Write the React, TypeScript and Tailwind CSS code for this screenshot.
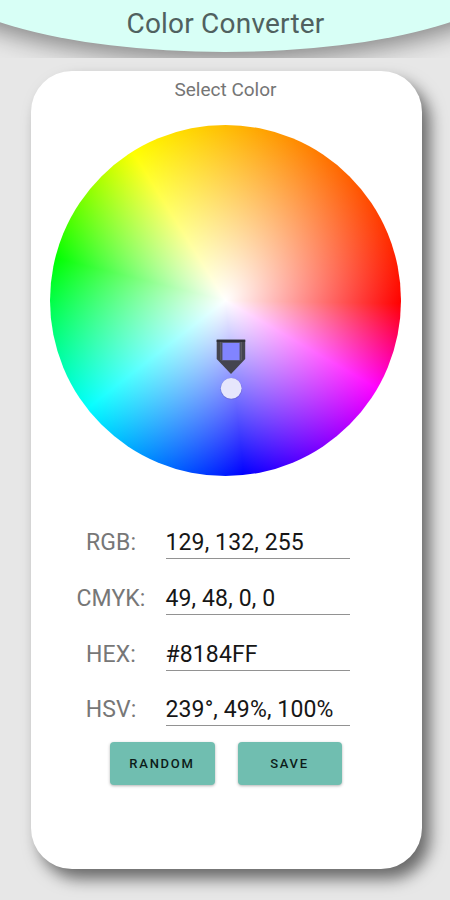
const rows = [
  { label: "RGB:", value: "129, 132, 255" },
  { label: "CMYK:", value: "49, 48, 0, 0" },
  { label: "HEX:", value: "#8184FF" },
  { label: "HSV:", value: "239°, 49%, 100%" },
];

function Header() {
  return (
    <header className="relative h-[58px] overflow-hidden">
      <div className="absolute bottom-[6px] left-1/2 h-[176px] w-[600px] -translate-x-1/2 rounded-[50%] bg-[#d8fff6] shadow-[0_8px_24px_rgba(0,0,0,0.42)]" />
      <h1 className="relative pl-px pt-[6.5px] text-center text-[28px] font-[385] leading-[33px] tracking-[0.2px] text-[#50615f]">Color Converter</h1>
    </header>
  );
}

function ColorWheel() {
  return (
    <div className="relative mr-[2px] mt-[24px] size-[351px] rounded-full bg-[radial-gradient(circle_closest-side,#fff,rgba(255,255,255,0)),conic-gradient(from_91deg,#f00_0deg,#f0f_29deg,#00f_83deg,#0ff_141deg,#0f0_193deg,#ff0_237deg,#f00_360deg)]">
      <svg className="absolute left-[166px] top-[214px]" width="30" height="62" viewBox="0 0 30 62">
        <path d="M0.7 0.7H29.2V20L15 35L0.7 20Z" fill="#44444f" />
        <path d="M0.7 0.7H29.2V3H0.7Z" fill="#303038" />
        <path d="M4.5 3V21M25.5 3V21" stroke="#5b5b62" strokeWidth="1" />
        <rect x="6" y="3.5" width="18" height="18" fill="#8184ff" stroke="#55566f" strokeWidth="1" />
        <circle cx="15.2" cy="49.8" r="10.8" fill="#55508c" opacity="0.3" />
        <circle cx="15.2" cy="49.3" r="10.4" fill="#e6e6fc" />
      </svg>
    </div>
  );
}

export default function App() {
  return (
    <div className="h-[900px] w-[450px] overflow-hidden bg-[#e7e7e7] font-[Roboto,sans-serif]">
      <Header />
      <main className="ml-[31px] mt-[13px] flex h-[798px] w-[391px] flex-col items-center rounded-[41px] bg-white shadow-[8px_10px_16px_rgba(0,0,0,0.55)]">
        <h2 className="mr-[2px] mt-[7px] text-[19px] font-[385] leading-[23px] text-[#757575]">Select Color</h2>
        <ColorWheel />
        <div className="mt-[44px] w-full">
          {rows.map((row) => (
            <div key={row.label} className="flex h-[55.8px] items-start">
              <span className="ml-[34px] w-[92px] pt-[9px] text-center text-[23px] font-[385] leading-[28px] tracking-[0.1px] text-[#777]">
                {row.label}
              </span>
              <span className="ml-[8.5px] h-[39px] w-[184px] whitespace-nowrap border-b border-[#929292] pt-[9px] text-[23px] font-[385] leading-[28px] tracking-[0.12px] text-[#161616]">
                {row.value}
              </span>
            </div>
          ))}
        </div>
        <div className="-mt-[1.2px] mr-[2px] flex gap-[23px]">
          <button className="h-[43px] w-[105px] rounded-[4px] bg-[#70beb0] text-[13px] font-[480] tracking-[1.75px] text-[#0c1c19] shadow-[0_1px_3px_rgba(0,0,0,0.3)]">
            RANDOM
          </button>
          <button className="h-[43px] w-[104px] rounded-[4px] bg-[#70beb0] text-[13px] font-[480] tracking-[1.75px] text-[#0c1c19] shadow-[0_1px_3px_rgba(0,0,0,0.3)]">
            SAVE
          </button>
        </div>
      </main>
    </div>
  );
}
